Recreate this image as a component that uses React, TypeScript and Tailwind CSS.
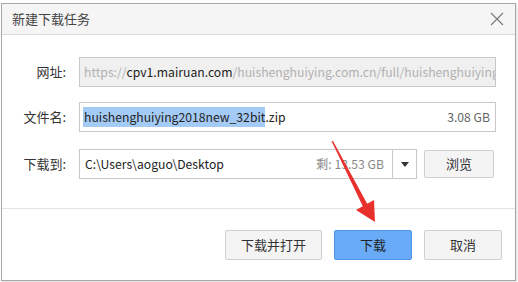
export default function App() {
  const font = "font-['Noto_Sans_CJK_SC','Noto_Sans',sans-serif]"
  return (
    <div className={`relative w-[518px] h-[282px] bg-white ${font} text-[13px] text-[#333]`}>
      <div className="absolute left-[1px] top-[3px] w-[515px] h-[278px] border border-[#a8a8a8] bg-white shadow-[1px_1px_2px_rgba(0,0,0,0.15)] flex flex-col">
        {/* title bar */}
        <div className="h-[31px] bg-[#f5f5f5] border-b border-[#d9d9d9] flex items-center justify-between pl-[10px] pr-[11px]">
          <span className="text-[13px] text-[#444]">新建下载任务</span>
          <svg width="14" height="14" viewBox="0 0 14 14">
            <path d="M1 1L13 13M13 1L1 13" stroke="#777" strokeWidth="1.1" />
          </svg>
        </div>

        <div className="flex flex-col pt-[22px] pr-[19px]">
          {/* url */}
          <div className="flex items-center h-[30px]">
            <div className="w-[64px] text-right">网址:</div>
            <div className="ml-[13px] flex-1 h-[30px] border border-[#c8c8c8] bg-[#f0f0f0] flex items-center px-[4px] overflow-hidden whitespace-nowrap text-[12.2px]">
              <span className="text-[#b0b0b0]">https://</span>
              <span className="text-[#222]">cpv1.mairuan.com</span>
              <span className="text-[#b0b0b0]">/huishenghuiying.com.cn/full/huishenghuiying</span>
            </div>
          </div>

          {/* file name */}
          <div className="flex items-center h-[30px] mt-[15px]">
            <div className="w-[64px] text-right">文件名:</div>
            <div className="ml-[13px] flex-1 h-[30px] border border-[#c8c8c8] bg-white flex items-center justify-between pl-[3px] pr-[5px] whitespace-nowrap text-[12.2px]">
              <span>
                <span className="bg-[#a4cbf6] text-[#222] py-[1px] pl-[1px]">huishenghuiying2018new_32bit</span>
                <span className="text-[#222]">.zip</span>
              </span>
              <span className="text-[#666]">3.08 GB</span>
            </div>
          </div>

          {/* save to */}
          <div className="flex items-center h-[30px] mt-[17px]">
            <div className="w-[64px] text-right">下载到:</div>
            <div className="ml-[13px] w-[338px] h-[30px] border border-[#c8c8c8] bg-white flex items-center">
              <div className="flex-1 flex items-center justify-between pl-[5px] pr-[8px] whitespace-nowrap text-[12.2px]">
                <span className="text-[#222]">C:\Users\aoguo\Desktop</span>
                <span className="text-[#888]">剩: 13.53 GB</span>
              </div>
              <div className="w-[24px] h-full border-l border-[#c8c8c8] flex items-center justify-center">
                <svg width="8" height="5" viewBox="0 0 8 5">
                  <path d="M0 0H8L4 5Z" fill="#333" />
                </svg>
              </div>
            </div>
            <button className="ml-[7px] w-[70px] h-[28px] border border-[#d0d0d0] bg-[#f4f4f4] rounded-[2px] text-[#333]">
              浏览
            </button>
          </div>
        </div>

        <div className="mt-[29px] border-t border-[#e3e3e3]" />

        {/* actions */}
        <div className="flex justify-end gap-[12px] pt-[21px] pr-[13px]">
          <button className="w-[97px] h-[30px] border border-[#d0d0d0] bg-[#f4f4f4] rounded-[2px] text-[#333]">
            下载并打开
          </button>
          <button className="w-[78px] h-[30px] border border-[#4f95e6] bg-[#6aabf7] rounded-[2px] text-[#222]">
            下载
          </button>
          <button className="w-[78px] h-[30px] border border-[#d0d0d0] bg-[#f4f4f4] rounded-[2px] text-[#333]">
            取消
          </button>
        </div>
      </div>

      {/* annotation arrow */}
      <svg className="absolute left-0 top-0 pointer-events-none" width="518" height="282" viewBox="0 0 518 282">
        <polygon
          points="331.5,141 333,141 367.2,203.8 374,200 375,222 356,210 362.8,206.2"
          fill="#e8302d"
        />
      </svg>
    </div>
  )
}
